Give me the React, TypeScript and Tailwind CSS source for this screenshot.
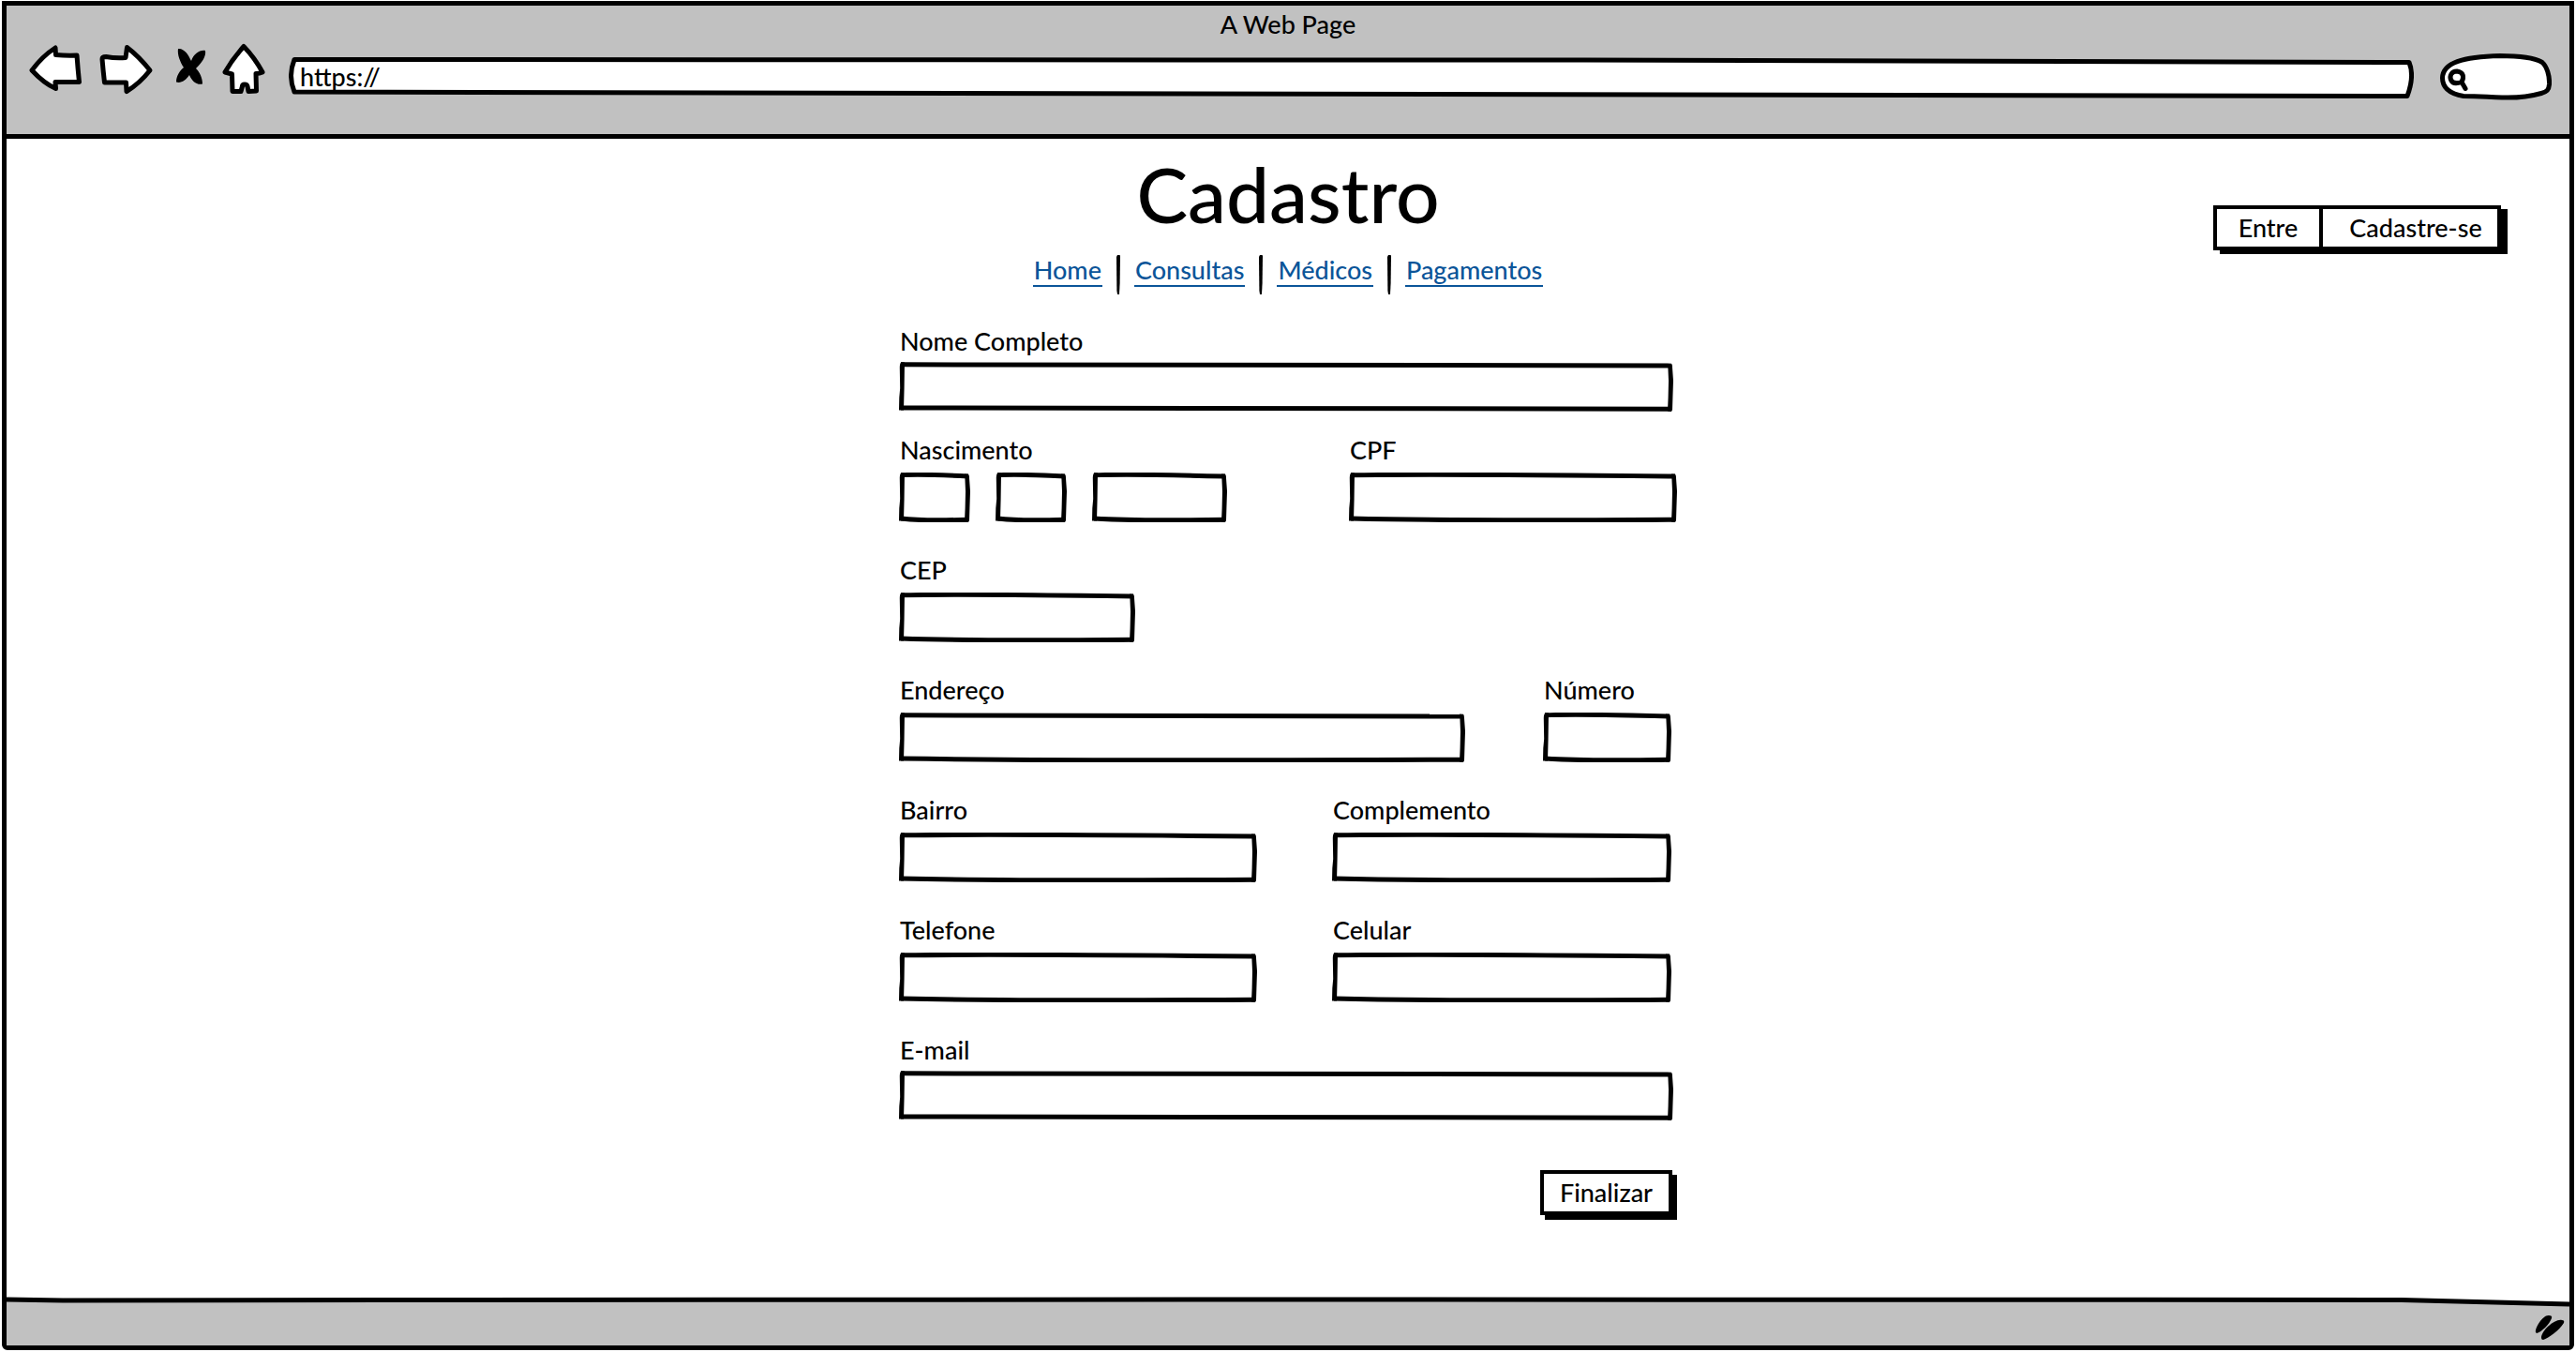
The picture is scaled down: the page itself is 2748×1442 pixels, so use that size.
import type { InputHTMLAttributes, ReactNode } from "react";

const stroke = {
  fill: "none",
  stroke: "#000",
  strokeWidth: 5,
  strokeLinejoin: "round" as const,
  strokeLinecap: "round" as const,
};

/* Hand-drawn outline that stretches with the box it decorates. */
function SketchOutline() {
  return (
    <span aria-hidden="true" className="pointer-events-none absolute inset-0">
      <svg className="absolute inset-0 h-full w-full px-0.5" viewBox="0 0 100 53" preserveAspectRatio="none">
        <path {...stroke} vectorEffect="non-scaling-stroke" strokeLinecap="butt" d="M0 2.8 C25 1.6 55 2.4 100 4" />
        <path {...stroke} vectorEffect="non-scaling-stroke" strokeLinecap="butt" d="M0 49 C30 51.6 60 51.2 100 50.2" />
      </svg>
      <svg className="absolute left-0 top-0 h-full w-1.5" viewBox="0 0 6 53" preserveAspectRatio="none">
        <path d="M2.5 0.2 L6 0.4 L5.6 28 L5 51.5 L0 51.5 L0.3 38 L1.2 28 L0.8 6 Q0.8 1.5 2.5 0.2Z" />
      </svg>
      <svg className="absolute right-0 top-0 h-full w-1.5" viewBox="0 0 6 53" preserveAspectRatio="none">
        <path d="M0 1.6 L3.8 1.8 Q5 2.2 5 6 L6 20 L5.4 38 L5 51 Q4.8 53 3 53 L0 52.6 L0.6 38 L1 20 L0.4 6Z" />
      </svg>
    </span>
  );
}

function SketchInput({ width, ...rest }: { width: string } & InputHTMLAttributes<HTMLInputElement>) {
  return (
    <span className={`relative block h-[53px] max-w-full ${width}`}>
      <SketchOutline />
      <input
        type="text"
        className="relative h-full w-full bg-transparent px-3 outline-none"
        {...rest}
      />
    </span>
  );
}

function Field({
  id,
  label,
  width,
  type = "text",
  compact = false,
}: {
  id: string;
  label: string;
  width: string;
  type?: string;
  compact?: boolean;
}) {
  return (
    <div className={`flex flex-col ${compact ? "gap-1.5" : "gap-2"}`}>
      <label htmlFor={id} className="pl-px leading-8">
        {label}
      </label>
      <SketchInput id={id} type={type} width={width} />
    </div>
  );
}

function ToolButton({ label, children }: { label: string; children: ReactNode }) {
  return (
    <button type="button" aria-label={label} className="block shrink-0">
      {children}
    </button>
  );
}

function BrowserBar() {
  return (
    <header className="flex min-h-[142px] flex-col border-b-[5px] border-black bg-[#c1c1c1]">
      <p className="text-center leading-10">A Web Page</p>
      <div className="flex gap-4 pl-6 pr-[19px]">
        <ToolButton label="Voltar">
          <svg width="58" height="62" viewBox="0 0 58 62">
            <path {...stroke} fill="#fff" d="M3 29 Q14 14 28 5 L28.5 12.5 Q40 13.5 51 13 Q52 27 53.5 41.5 L28 41.5 L28.5 48.5 Q16 43 3 29Z" />
          </svg>
        </ToolButton>
        <ToolButton label="Avançar">
          <svg width="66" height="62" viewBox="0 0 66 62">
            <path {...stroke} fill="#fff" d="M4 17 Q4 14.5 8 14.5 Q19 16.5 29 15.5 L30.5 4.5 Q43 14 55 29 Q44 43 30 51.5 L29.5 42 L6.5 42 Q5 29 4 17Z" />
          </svg>
        </ToolButton>
        <ToolButton label="Parar">
          <svg width="34" height="62" viewBox="0 0 34 62">
            <path d="M3 6 C9 5 14 12 17 19 C20 11 26 7 32 8 C33 14 29 20 22 27 C26 31 29 37 29 43.5 C23 45 18 41 15 34 C11 40 6 43 1 41.5 C1 35 5 29 9 26 C5 20 2 12 3 6Z" />
          </svg>
        </ToolButton>
        <ToolButton label="Início">
          <svg width="55" height="62" viewBox="0 0 55 62">
            <path {...stroke} fill="#fff" d="M23 3.5 Q35 16 43 31 Q40 32.5 36 32.5 L36.5 51 L28 51.5 L27 46 Q26.5 44 24 44 Q21.5 44 21.5 46 L20 51.5 L11 51.5 L10.5 33 L3 31 Q11 17 23 3.5Z" />
          </svg>
        </ToolButton>
        <div className="relative mr-3 h-[62px] flex-1">
          <svg aria-hidden="true" className="absolute inset-0 h-full w-full" viewBox="0 0 2266 62" preserveAspectRatio="none">
            <path {...stroke} fill="#fff" d="M6 17.5 C800 16.5 1500 18 2261 20.5 Q2267 35 2259 56.5 C1700 58 1000 56.5 6 52 Q-1 35 6 17.5Z" />
          </svg>
          <input
            aria-label="Endereço da página"
            defaultValue="https://"
            className="relative h-full w-full bg-transparent px-3 pt-2 outline-none"
          />
        </div>
        <div className="relative h-[62px] w-[119px] shrink-0">
          <svg aria-hidden="true" className="absolute inset-0" width="119" height="62" viewBox="0 0 119 62">
            <path {...stroke} fill="#fff" d="M2.5 37 C3 21 24 14.5 64 13.5 C84 13.5 101 16 109 20.5 C114 25 117 35 116.5 44 C116 50 114 52 108 53.5 C92 58 80 58.5 66 58 C50 57.5 42 56.5 25 56.5 C10 54 2.5 47 2.5 37Z" />
            <path {...stroke} d="M23 41.5 C26 36 25 31 18 30 C12 30 10 35 11.5 39 C13 43 17 43.5 23 41.5 L27 48.5" />
          </svg>
          <input type="search" aria-label="Pesquisar" className="relative h-full w-full bg-transparent pl-9 pr-3 pt-2 outline-none" />
        </div>
      </div>
    </header>
  );
}

const links = ["Home", "Consultas", "Médicos", "Pagamentos"];

function Divider() {
  return (
    <svg aria-hidden="true" width="4" height="42" viewBox="0 0 4 42">
      <path d="M1 0 L3.5 0 L4 1 L3.6 30 L3 42 L1 42 L0.4 38 L0 2Z" />
    </svg>
  );
}

function SiteHeader() {
  return (
    <div className="grid grid-cols-[1fr_auto_1fr] items-start">
      <div className="col-start-2 flex flex-col items-center">
        <h1 className="text-[82px] leading-20 font-medium">Cadastro</h1>
        <nav className="mt-[26px] flex h-[42px] gap-[15px]">
          {links.map((name, i) => (
            <div key={name} className="flex items-start gap-[15px]">
              {i > 0 && <Divider />}
              <a href="#" className="border-b-2 border-[#0b5599] px-px leading-8 text-[#0b5599]">
                {name}
              </a>
            </div>
          ))}
        </nav>
      </div>
      <div className="mt-[53px] mr-[73px] flex h-12 justify-self-end border-4 border-black bg-white shadow-[7px_4px_0_#000]">
        <button type="button" className="w-[113px] border-r-4 border-black leading-9">
          Entre
        </button>
        <button type="button" className="w-[186px] pl-3 leading-9">
          Cadastre-se
        </button>
      </div>
    </div>
  );
}

function RegisterForm() {
  return (
    <form className="mx-auto mt-[34px] flex w-full max-w-[830px] flex-col">
      <Field id="nome" label="Nome Completo" width="w-[826px]" compact />
      <div className="mt-[25px] flex justify-between">
        <fieldset>
          <legend className="pl-px leading-8">Nascimento</legend>
          <div className="mt-2 flex gap-[27px]">
            <SketchInput aria-label="Dia" inputMode="numeric" width="w-[76px]" />
            <SketchInput aria-label="Mês" inputMode="numeric" width="w-[76px]" />
            <SketchInput aria-label="Ano" inputMode="numeric" width="w-36" />
          </div>
        </fieldset>
        <Field id="cpf" label="CPF" width="w-[350px]" />
      </div>
      <div className="mt-[35px] flex">
        <Field id="cep" label="CEP" width="w-[252px]" />
      </div>
      <div className="mt-[35px] flex gap-[83px]">
        <Field id="endereco" label="Endereço" width="w-[604px]" />
        <Field id="numero" label="Número" width="w-[137px]" />
      </div>
      <div className="mt-[35px] flex gap-20">
        <Field id="bairro" label="Bairro" width="w-[382px]" />
        <Field id="complemento" label="Complemento" width="w-[362px]" />
      </div>
      <div className="mt-[35px] flex gap-20">
        <Field id="telefone" label="Telefone" type="tel" width="w-[382px]" />
        <Field id="celular" label="Celular" type="tel" width="w-[362px]" />
      </div>
      <div className="mt-[35px] flex">
        <Field id="email" label="E-mail" type="email" width="w-[826px]" compact />
      </div>
      <button
        type="button"
        className="mt-[53px] mr-[5px] h-12 w-[141px] self-end border-4 border-black bg-white leading-9 shadow-[5px_5px_0_#000]"
      >
        Finalizar
      </button>
    </form>
  );
}

function StatusBar() {
  return (
    <footer className="relative h-[52px] bg-[#c1c1c1]">
      <svg aria-hidden="true" className="absolute inset-0 h-full w-full" viewBox="0 0 2734 52" preserveAspectRatio="none">
        <path fill="#fff" d="M0 0 L2734 0 L2734 7 L2555 3 L0 3Z" />
        <path {...stroke} strokeLinecap="butt" d="M0 3 L60 4 L400 3.5 L1500 3 L2555 3.5 L2734 8" />
      </svg>
      <svg aria-hidden="true" className="absolute right-1 bottom-1" width="34" height="32" viewBox="0 0 34 32">
        <path d="M2 22 C1 17 10 3 16 4 Q20 4 19 7 C17 13 8 22 3 23Z" />
        <path d="M8 28 C8 20 23 7 30 9 Q33 9 32 12 C27 20 16 28 10 30 Q8 30 8 28Z" />
      </svg>
    </footer>
  );
}

export default function App() {
  return (
    <div className="flex min-h-screen bg-white px-0.5 pt-px pb-0.5 font-['Lato','Open_Sans',sans-serif] text-[27px] font-medium text-black">
      <div className="flex flex-1 flex-col rounded-b-md border-[5px] border-black">
        <BrowserBar />
        <main className="flex-1 pt-[18px] pb-12">
          <SiteHeader />
          <RegisterForm />
        </main>
        <StatusBar />
      </div>
    </div>
  );
}
